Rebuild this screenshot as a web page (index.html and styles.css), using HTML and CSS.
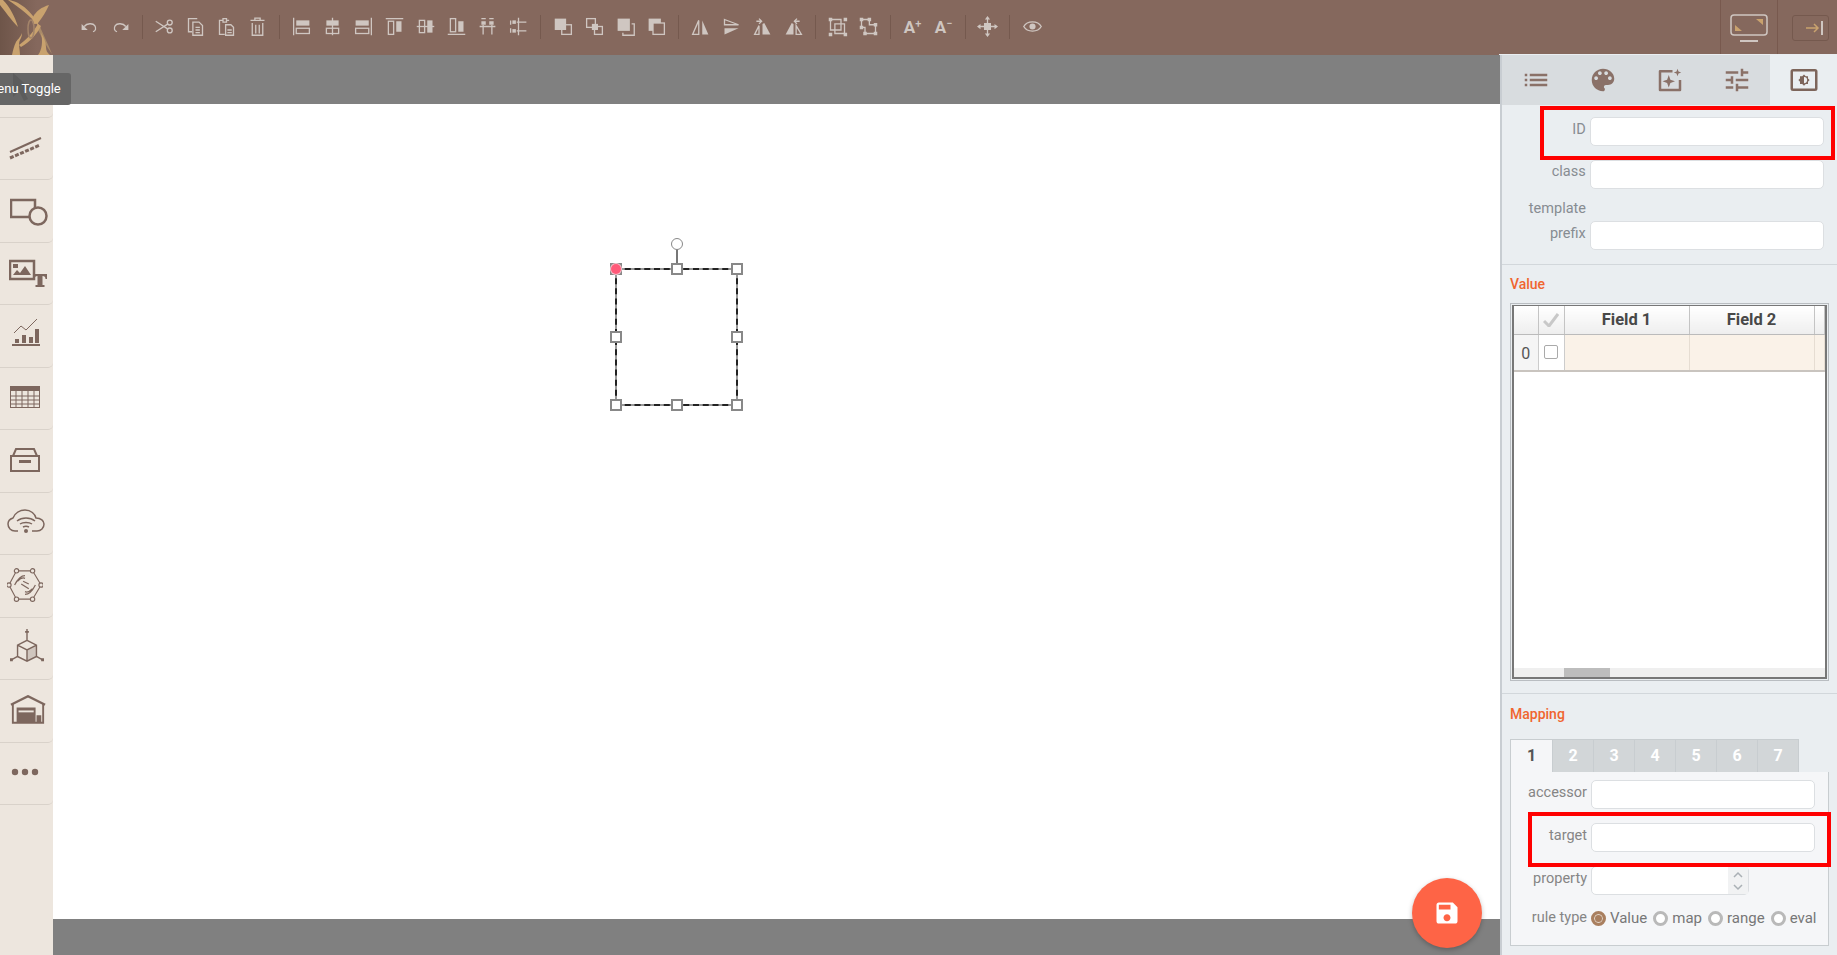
FILE: index.html
```html
<!doctype html>
<html>
<head>
<meta charset="utf-8">
<title>Editor</title>
<link rel="stylesheet" href="styles.css">
</head>

<body>
	<div class="head">
		<div class="logo">
			<svg width="53" height="55" viewBox="0 0 53 55"><g fill="#c9a26e"><path d="M3 0C10 7 15 17 18 27C11 20 5 11 0 5V0Z"/><path d="M8 0C21 1 34 14 41 29C32 17 20 8 8 0Z"/><path d="M40 27C44 36 48 44 52 54C46 46 42 38 38 30Z" fill="#a98a68"/><path d="M49 5C42 7 36 11 33 17C31 22 33 26 38 23C42 18 46 12 49 5Z"/><path d="M38 24C32 34 26 40 19 45L21 47C30 42 37 34 41 26Z"/><path d="M22 33C20 38 17 40 16 42C14 46 13 50 12 55H20C20 49 18 44 20 40C21 38 22 36 22 33Z"/><path d="M41 33C44 38 46 42 46 47C46 50 47 53 50 55H38C42 50 43 41 41 33Z"/></g><ellipse cx="31" cy="29" rx="3" ry="9" fill="none" stroke="#a3846a" stroke-width="1.500"/></svg>
		</div>
		<div class="tools">
			<span class="tool"><svg viewBox="0 0 24 24"><path d="M3 9v7h7z"/><path class="ln" d="M6 12C9 8 16 8 18 11C20 14 19 17 16 18"/></svg></span>
			<span class="tool"><svg viewBox="0 0 24 24"><path d="M21 9v7h-7z"/><path class="ln" d="M18 12C15 8 8 8 6 11C4 14 5 17 8 18"/></svg></span>
			<i class="sep"></i>
			<span class="tool"><svg viewBox="0 0 24 24"><circle class="ln" cx="18" cy="7.500" r="2.800"/><circle class="ln" cx="18" cy="16.500" r="2.800"/><path class="ln" d="M2 6L16 15M2 18L16 9"/></svg></span>
			<span class="tool"><svg viewBox="0 0 24 24"><path class="ln" d="M14 3H4v15h4M9 7h7l4 4v11H9zM12 13h5M12 16h5M12 19h5"/></svg></span>
			<span class="tool"><svg viewBox="0 0 24 24"><path class="ln" d="M8 5H4v16h6M15 5h-3M8 3h4v4H8zM11 10h6l3 3v9h-9zM13 16h5M13 19h5"/></svg></span>
			<span class="tool"><svg viewBox="0 0 24 24"><path class="ln" d="M4 5h16M9 5V2.500h6V5M6 8v14h12V8M10 10v10M14 10v10"/></svg></span>
			<i class="sep"></i>
			<span class="tool"><svg viewBox="0 0 24 24"><path class="ln" d="M3 2v20"/><rect x="6" y="5" width="15" height="6"/><rect class="ln" x="6" y="14" width="15" height="6"/></svg></span>
			<span class="tool"><svg viewBox="0 0 24 24"><path class="ln" d="M12 2v20"/><rect x="5" y="5" width="14" height="6"/><rect class="ln" x="5" y="14" width="14" height="6"/></svg></span>
			<span class="tool"><svg viewBox="0 0 24 24"><path class="ln" d="M21 2v20"/><rect x="3" y="5" width="15" height="6"/><rect class="ln" x="3" y="14" width="15" height="6"/></svg></span>
			<span class="tool"><svg viewBox="0 0 24 24"><path class="ln" d="M2 3h20"/><rect class="ln" x="5" y="6" width="6" height="15"/><rect x="14" y="6" width="6" height="12"/></svg></span>
			<span class="tool"><svg viewBox="0 0 24 24"><path class="ln" d="M2 12h20"/><rect class="ln" x="5" y="5" width="6" height="14"/><rect x="14" y="5" width="6" height="14"/></svg></span>
			<span class="tool"><svg viewBox="0 0 24 24"><path class="ln" d="M2 21h20"/><rect class="ln" x="5" y="3" width="6" height="15"/><rect x="14" y="6" width="6" height="12"/></svg></span>
			<span class="tool"><svg viewBox="0 0 24 24"><path class="ln" d="M7 10v11M17 10v11M3 12h18M5 3h5M14 3h5" /><rect x="5" y="6" width="5" height="4"/><rect x="14" y="6" width="5" height="4"/></svg></span>
			<span class="tool"><svg viewBox="0 0 24 24"><path class="ln" d="M12 2v20M10 7h11M10 17h11M3 5v5M3 14v5"/><rect x="5" y="5" width="4" height="4"/><rect x="5" y="15" width="4" height="4"/></svg></span>
			<i class="sep"></i>
			<span class="tool"><svg viewBox="0 0 24 24"><rect x="2" y="3" width="13" height="13"/><rect class="ln" x="10" y="10" width="11" height="11"/></svg></span>
			<span class="tool"><svg viewBox="0 0 24 24"><rect class="ln" x="3" y="3" width="10" height="10"/><rect x="9" y="9" width="7" height="7"/><rect class="ln" x="12" y="12" width="9" height="9"/></svg></span>
			<span class="tool"><svg viewBox="0 0 24 24"><rect x="3" y="3" width="14" height="14"/><path class="ln" d="M19 9h3v13H9v-3"/></svg></span>
			<span class="tool"><svg viewBox="0 0 24 24"><rect x="3" y="3" width="14" height="14"/><rect class="ln bg" x="8" y="8" width="13" height="13"/></svg></span>
			<i class="sep"></i>
			<span class="tool"><svg viewBox="0 0 24 24"><path class="ln" d="M10 5L3 21h7z"/><path d="M14 5l7 16h-7z"/></svg></span>
			<span class="tool"><svg viewBox="0 0 24 24"><path class="ln" d="M4 4l16 6H4z"/><path d="M4 14h16L4 21z"/></svg></span>
			<span class="tool"><svg viewBox="0 0 24 24"><path class="ln" d="M8 11L3 21h5z"/><path d="M14 8l7 13h-9V9z"/><path class="ln" d="M5 6h6M8 3l3 3-3 3"/></svg></span>
			<span class="tool"><svg viewBox="0 0 24 24"><path d="M10 8L3 21h9V9z"/><path class="ln" d="M15 11l6 10h-6zM19 6h-6M16 3l-3 3 3 3"/></svg></span>
			<i class="sep"></i>
			<span class="tool"><svg viewBox="0 0 24 24"><path class="ln" d="M4 4h12v12H4zM9 9h11v11H9z"/><path d="M2 2h4v4H2zM19 2h4v4h-4zM2 19h4v4H2zM19 19h4v4h-4z"/></svg></span>
			<span class="tool"><svg viewBox="0 0 24 24"><path class="ln" d="M4 4h9v6h7v10H8v-7H4z"/><path d="M2 2h4v4H2zM11 2h4v4h-4zM2 11h4v4H2zM18 8h4v4h-4zM6 18h4v4H6zM18 18h4v4h-4z"/></svg></span>
			<i class="sep"></i>
			<span class="tool txt">A<sup>+</sup></span>
			<span class="tool txt">A<sup>−</sup></span>
			<i class="sep"></i>
			<span class="tool"><svg viewBox="0 0 24 24"><rect x="8" y="8" width="8" height="8"/><path class="ln" d="M12 2v20M2 12h20"/><path d="M12 0l3 4H9zM12 24l3-4H9zM0 12l4-3v6zM24 12l-4-3v6z"/></svg></span>
			<i class="sep"></i>
			<span class="tool"><svg viewBox="0 0 24 24"><path class="ln" d="M2 12C6 5 18 5 22 12C18 19 6 19 2 12Z"/><circle cx="12" cy="12" r="3.500"/></svg></span>
		</div>
		<div class="head-right">
			<div class="hr-cell">
				<svg width="38" height="28" viewBox="0 0 38 28"><rect x="1" y="1" width="36" height="20" rx="3" fill="none" stroke="#cfc6c1" stroke-width="1.500"/><path d="M10 27h18" stroke="#cfc6c1" stroke-width="2"/><path d="M5 17V11l7 6zM33 5v6l-7-6z" fill="#c9a26e"/></svg>
			</div>
			<div class="hr-cell hr-last">
				<span class="collapse"><svg width="20" height="16" viewBox="0 0 20 16"><path d="M1 8h12M9 4l4 4-4 4" fill="none" stroke="#c9a26e" stroke-width="1.500"/><path d="M17 1v14" stroke="#cfc6c1" stroke-width="2"/></svg></span>
			</div>
		</div>
	</div>

	<div class="main">
		<div class="side">
			<div class="side-item">
				<div class="tip">
					<svg class="tip-arrow" width="22" height="28" viewBox="0 0 22 28"><path d="M1 0V24l6-6 5 10 4-2-5-9h9z"/></svg>
					Menu Toggle
				</div>
			</div>
			<div class="side-item"><svg class="ic-line" width="36" height="30" viewBox="0 0 36 30"><path class="s" d="M3 18L34 4" stroke-width="2"/><path class="s" d="M3 24L33 11" stroke-width="3" stroke-dasharray="4 1.500"/></svg></div>
			<div class="side-item"><svg class="ic-shape" width="38" height="30" viewBox="0 0 38 30"><path class="s" d="M20 20H1V3h24v8" stroke-width="2.500"/><circle class="s" cx="28" cy="19" r="8.500" stroke-width="2.500"/></svg></div>
			<div class="side-item"><svg class="ic-media" width="38" height="30" viewBox="0 0 38 30"><path class="s" d="M1 3h24v18H1z" stroke-width="2.500"/><path class="f" d="M4 17l4-5 3 3 5-7 6 9zM4 6h5v4H4z"/><path class="f" d="M24 16h14v5h-1.500c0-2-1-3-3-3v9h2v2h-9v-2h2v-9c-2 0-3 1-3 3H24z"/></svg></div>
			<div class="side-item"><svg class="ic-chart" width="30" height="28" viewBox="0 0 30 28"><path class="s" d="M1 27h28" stroke-width="2"/><path class="s" d="M3 15l7-7 5 4 11-11" stroke-width="1"/><path class="f" d="M4 21h4v4H4zM11 17h4v8h-4zM18 19h4v6h-4zM24 11h4v14h-4z"/></svg></div>
			<div class="side-item"><svg width="30" height="22" viewBox="0 0 30 22"><rect class="s" x=".5" y=".5" width="29" height="21" stroke-width="1"/><path class="f" d="M0 0h30v5H0z"/><path class="s" d="M0 10h30M0 14h30M0 18h30M6 5v17M12 5v17M18 5v17M24 5v17" stroke-width="1"/></svg></div>
			<div class="side-item"><svg width="30" height="26" viewBox="0 0 30 26"><path class="s" d="M3 9l3-7h18l3 7M1 9h28v15H1z" stroke-width="2"/><path class="f" d="M9 13h12v3H9z"/></svg></div>
			<div class="side-item"><svg class="ic-cloud" width="38" height="26" viewBox="0 0 38 26"><path class="s" d="M11 22H8C4 22 1 19 1 15C1 12 3 10 6 9C8 4 13 1 18 1C24 1 28 5 29 9C34 9 37 12 37 15C37 19 34 22 30 22H25" stroke-width="1.500"/><path class="s" d="M10 12C15 8 23 8 28 12M13 15C16 13 22 13 25 15M16 18C18 17 20 17 22 18" stroke-width="1.500"/><circle class="f" cx="19" cy="22" r="2"/></svg></div>
			<div class="side-item"><svg width="36" height="34" viewBox="0 0 38 36"><path class="s" d="M10 3h17l9 15-9 15H10L2 18z" stroke-width="1.200"/><circle class="w" cx="10" cy="3" r="2.300"/><circle class="w" cx="27" cy="3" r="2.300"/><circle class="w" cx="36" cy="18" r="2.300"/><circle class="w" cx="27" cy="33" r="2.300"/><circle class="w" cx="10" cy="33" r="2.300"/><circle class="w" cx="2" cy="18" r="2.300"/><path class="s" d="M11 14C14 11 17 10 19 11M8 18C11 12 15 8 19 8M27 22C24 25 21 26 19 25M30 18C27 24 23 28 19 28M15 17l8 5M17 14l6 3" stroke-width="1.300"/></svg></div>
			<div class="side-item"><svg class="ic-cube" width="34" height="36" viewBox="0 0 36 38"><path class="s" d="M18 0v12M8 17l10-5 10 5v12l-10 5-10-5zM8 17l10 5 10-5M18 22v12M8 29l-7 4M28 29l7 4" stroke-width="1.500"/><path class="f" d="M18 22l10-5v12l-10 5z" opacity=".25"/><path class="f" d="M16 2h4v2h-4zM0 31h3v3H0zM33 31h3v3h-3z"/></svg></div>
			<div class="side-item"><svg class="ic-house" width="36" height="29" viewBox="0 0 38 30"><path class="s" d="M1 10L19 1l18 9" stroke-width="2.500"/><path class="s" d="M3 9v20h32V9" stroke-width="2"/><path class="f" d="M7 13h20v16H7zM28 21h5v8h-5z"/><path d="M9 16h16v2H9z" fill="#ede6de"/></svg></div>
			<div class="side-item"><svg width="28" height="8" viewBox="0 0 28 8"><circle class="f" cx="4" cy="4" r="3.200"/><circle class="f" cx="14" cy="4" r="3.200"/><circle class="f" cx="24" cy="4" r="3.200"/></svg></div>
		</div>

		<div class="stage">
			<div class="band"></div>
			<div class="canvas">
				<div class="sel">
					<i class="rot-line"></i>
					<i class="rot"></i>
					<i class="hd tl"></i><i class="hd tc"></i><i class="hd tr"></i>
					<i class="hd ml"></i><i class="hd mr"></i>
					<i class="hd bl"></i><i class="hd bc"></i><i class="hd br"></i>
					<i class="dot"></i>
				</div>
			</div>
			<div class="band-b"></div>
			<div class="fab"><svg width="28" height="28" viewBox="0 0 24 24"><path fill="#fff" d="M17 3H5c-1.110 0-2 .9-2 2v14c0 1.100.89 2 2 2h14c1.100 0 2-.9 2-2V7l-4-4zm-5 16c-1.660 0-3-1.340-3-3s1.340-3 3-3 3 1.340 3 3-1.340 3-3 3zm3-10H5V5h10v4z"/></svg></div>
		</div>

		<div class="panel">
			<div class="tabs">
				<div class="tab"><svg viewBox="0 0 24 24"><path d="M3 13h2v-2H3v2zm0 4h2v-2H3v2zm0-8h2V7H3v2zm4 4h14v-2H7v2zm0 4h14v-2H7v2zM7 7v2h14V7H7z"/></svg></div>
				<div class="tab"><svg viewBox="0 0 24 24"><path d="M12 3c-4.970 0-9 4.030-9 9s4.030 9 9 9c.83 0 1.500-.67 1.500-1.500 0-.39-.15-.74-.39-1.010-.23-.26-.38-.61-.38-.99 0-.83.67-1.500 1.500-1.500H16c2.760 0 5-2.240 5-5 0-4.420-4.030-8-9-8zm-5.500 9c-.83 0-1.500-.67-1.500-1.500S5.670 9 6.500 9 8 9.670 8 10.500 7.330 12 6.500 12zm3-4C8.670 8 8 7.330 8 6.500S8.670 5 9.500 5s1.500.67 1.500 1.500S10.330 8 9.500 8zm5 0c-.83 0-1.500-.67-1.500-1.500S13.670 5 14.500 5s1.500.67 1.500 1.500S15.330 8 14.500 8zm3 4c-.83 0-1.500-.67-1.500-1.500S16.670 9 17.500 9s1.500.67 1.500 1.500-.67 1.500-1.500 1.500z"/></svg></div>
				<div class="tab"><svg viewBox="0 0 24 24"><path d="M14 4H4a1 1 0 0 0-1 1v15a1 1 0 0 0 1 1h16a1 1 0 0 0 1-1V12h-2v7H5V6h9z"/><path d="M11 8l1.300 3.700L16 13l-3.700 1.300L11 18l-1.300-3.700L6 13l3.700-1.300zM18 3l.8 2.200L21 6l-2.200.8L18 9l-.8-2.200L15 6l2.200-.8z"/></svg></div>
				<div class="tab"><svg viewBox="0 0 24 24"><path d="M3 17v2h6v-2H3zM3 5v2h10V5H3zm10 16v-2h8v-2h-8v-2h-2v6h2zM7 9v2H3v2h4v2h2V9H7zm14 4v-2H11v2h10zm-6-4h2V7h4V5h-4V3h-2v6z"/></svg></div>
				<div class="tab tab-on"><svg viewBox="0 0 24 24"><rect x="2.200" y="4.200" width="19.600" height="15.600" rx="1" fill="none" stroke="#7d655b" stroke-width="2"/><path d="M12 7.500l1.400 1.400h1.800v1.800l1.300 1.300-1.300 1.300v1.800h-1.800L12 16.500l-1.400-1.400H8.800v-1.800L7.500 12l1.300-1.300V8.900h1.800z"/><path d="M12 9.500a2.500 2.500 0 0 1 0 5z" fill="#eaeef1"/></svg></div>
			</div>

			<div class="sec sec-top">
				<div class="row mark mark-id"><label>ID</label><input class="ipt" type="text"></div>
				<div class="row"><label>class</label><input class="ipt" type="text"></div>
				<div class="tpl">template</div>
				<div class="row"><label class="lb-prefix">prefix</label><input class="ipt" type="text"></div>
			</div>

			<div class="sec sec-val">
				<h4>Value</h4>
				<div class="grid">
					<div class="grid-in">
						<table>
							<tr class="gh">
								<th class="c0"></th>
								<th class="c1"><svg width="16" height="14" viewBox="0 0 16 14"><path d="M1 8l5 5 9-12" fill="none" stroke="#c8c8c8" stroke-width="3"/></svg></th>
								<th class="c2">Field 1</th>
								<th class="c2">Field 2</th>
								<th></th>
							</tr>
							<tr class="gr">
								<td class="c0 num">0</td>
								<td class="c1 chk"><i class="box"></i></td>
								<td class="cell"></td>
								<td class="cell"></td>
								<td class="cell"></td>
							</tr>
						</table>
						<div class="hbar"><i class="thumb"></i></div>
					</div>
				</div>
			</div>

			<div class="sec sec-map">
				<h4>Mapping</h4>
				<div class="mtabs">
					<span class="mt mt-on">1</span><span class="mt">2</span><span class="mt">3</span><span class="mt">4</span><span class="mt">5</span><span class="mt">6</span><span class="mt">7</span>
				</div>
				<div class="mbox">
					<div class="row"><label>accessor</label><input class="ipt" type="text"></div>
					<div class="row mark mark-tg"><label>target</label><input class="ipt" type="text"></div>
					<div class="row">
						<label>property</label>
						<div class="num-ipt"><span class="spin"><svg width="12" height="22" viewBox="0 0 12 22"><path d="M2 7l4-4 4 4M2 15l4 4 4-4" fill="none" stroke="#aab0b5" stroke-width="1.500"/></svg></span></div>
					</div>
					<div class="row rule">
						<label>rule type</label>
						<span class="rad rad-on"></span><span class="rt">Value</span>
						<span class="rad"></span><span class="rt">map</span>
						<span class="rad"></span><span class="rt">range</span>
						<span class="rad"></span><span class="rt">eval</span>
					</div>
				</div>
			</div>
		</div>
	</div>
</body>
</html>
```

FILE: styles.css
```css
*{
	margin: 0;
	padding: 0;
	box-sizing: border-box;
}
body{
	height: 955px;
	overflow: hidden;
	font-family: Roboto, sans-serif;
	background: #fff;
}

/* top bar */
.head{
	display: flex;
	height: 55px;
	background: #85685d;
}
.logo{
	width: 53px;
	height: 55px;
	overflow: hidden;
	background: linear-gradient(90deg, #6e5549, #85685d 70%);
}
.logo svg{
	display: block;
}
.tools{
	display: flex;
	align-items: center;
	flex: 1;
	padding: 0 0 2px 21px;
}
.tool{
	display: flex;
	align-items: center;
	justify-content: center;
	width: 31px;
	height: 24px;
	color: #cfc6c1;
}
.tool svg{
	width: 21px;
	height: 21px;
	fill: #cfc6c1;
}
.tool .ln{
	fill: none;
	stroke: #cfc6c1;
	stroke-width: 1.5;
}
.tool .bg{
	fill: #85685d;
}
.txt{
	font-size: 17px;
	font-weight: 700;
}
.txt sup{
	font-size: 11px;
	font-weight: 500;
	margin-top: -6px;
	vertical-align: baseline;
}
.sep{
	width: 1px;
	height: 24px;
	margin: 0 6.100px;
	background: #75594e;
}
.head-right{
	display: flex;
	height: 55px;
}
.hr-cell{
	display: flex;
	align-items: center;
	justify-content: center;
	width: 57px;
	border-left: 1px solid #78594e;
}
.hr-last{
	width: 60px;
	padding-right: 8px;
	justify-content: flex-end;
}
.collapse{
	display: flex;
	align-items: center;
	justify-content: flex-end;
	width: 37px;
	height: 26px;
	padding-right: 3px;
	border: 1px solid #75594e;
	border-radius: 3px;
}

.main{
	display: flex;
	height: 900px;
}

/* left menu */
.side{
	width: 53px;
	background: #ede6de;
}
.side-item{
	position: relative;
	display: flex;
	align-items: center;
	justify-content: center;
	height: 62.500px;
	padding: 0 3px 2px 0;
	border-bottom: 1px solid #d9d2ca;
	border-bottom-right-radius: 5px;
}
.side-item .s{
	fill: none;
	stroke: #7d675e;
}
.side-item .f{
	fill: #7d675e;
}
.side-item .w{
	fill: #ede6de;
	stroke: #7d675e;
	stroke-width: 1.2;
}
.ic-line{
	margin-top: 3px;
}
.ic-shape{
	margin: 4px 0 0 7px;
}
.ic-media{
	margin: 2px 0 0 5px;
}
.ic-chart{
	margin: 0 0 6px 2px;
}
.ic-cloud{
	margin-left: 2px;
}
.ic-cube{
	margin-left: 3px;
}
.ic-house{
	margin-left: 5px;
}
.tip{
	position: absolute;
	left: -24px;
	top: 18px;
	height: 32px;
	padding: 0 10px;
	line-height: 32px;
	font-size: 13px;
	color: #fff;
	white-space: nowrap;
	background: #666;
	border-radius: 3px;
	z-index: 5;
}
.tip-arrow{
	position: absolute;
	left: 36px;
	top: 0;
	fill: #5c5c5c;
	z-index: -1;
}

/* canvas */
.stage{
	position: relative;
	display: flex;
	flex-direction: column;
	flex: 1;
	background: #808080;
}
.band{
	height: 49px;
}
.canvas{
	position: relative;
	height: 815px;
	background: #fff;
}
.band-b{
	flex: 1;
}
.sel{
	position: absolute;
	left: 562px;
	top: 164px;
	width: 123px;
	height: 138px;
	border: 2px dashed #222;
	background: linear-gradient(#fff, #fff) padding-box, #999 border-box;
}
.hd{
	position: absolute;
	width: 12px;
	height: 12px;
	background: #fff;
	border: 2px solid #888;
}
.tl{ left: -7px; top: -7px; background: #999; }
.tc{ left: 53.500px; top: -7px; }
.tr{ right: -7px; top: -7px; }
.ml{ left: -7px; top: 61px; }
.mr{ right: -7px; top: 61px; }
.bl{ left: -7px; bottom: -7px; }
.bc{ left: 53.500px; bottom: -7px; }
.br{ right: -7px; bottom: -7px; }
.dot{
	position: absolute;
	left: -6px;
	top: -6px;
	width: 10px;
	height: 10px;
	border-radius: 50%;
	background: #ff5a79;
	box-shadow: 0 0 0 1px #f5c4cd;
}
.rot{
	position: absolute;
	left: 53.500px;
	top: -32px;
	width: 12px;
	height: 12px;
	background: #fff;
	border: 1px solid #888;
	border-radius: 50%;
}
.rot-line{
	position: absolute;
	left: 58.500px;
	top: -21px;
	width: 2px;
	height: 16px;
	background: #777;
}
.fab{
	position: absolute;
	left: 1359px;
	top: 823px;
	display: flex;
	align-items: center;
	justify-content: center;
	width: 70px;
	height: 70px;
	border-radius: 50%;
	background: #fe6446;
	box-shadow: 0 2px 5px rgba(0, 0, 0, .25);
}

/* right panel */
.panel{
	width: 337px;
	height: 900px;
	background: #eaeef1;
	border-left: 2px solid #c8cdd2;
	outline: 1px solid #eaeef1;
}
.tabs{
	display: flex;
	height: 50px;
	background: #d8dcdf;
}
.tab{
	display: flex;
	align-items: center;
	justify-content: center;
	flex: 1;
}
.tab svg{
	width: 30px;
	height: 30px;
	fill: #8a7168;
}
.tab-on{
	background: #eaeef1;
}
.tab-on svg{
	fill: #7d655b;
}
.sec{
	border-bottom: 1px solid #d2d7db;
}
.sec-top{
	height: 160px;
	padding: 12px 13px 0 0;
}
.row{
	display: flex;
	align-items: flex-start;
	height: 29px;
	margin-bottom: 14px;
}
.row label{
	width: 84px;
	font-size: 14.500px;
	line-height: 23px;
	color: #878c92;
	text-align: right;
}
.row .lb-prefix{
	line-height: 26px;
}
.mark-id label{
	line-height: 25px;
}
.ipt{
	width: 235px;
	height: 29px;
	margin-left: 4px;
	background: #fff;
	border: 1px solid #dcdfe2;
	border-radius: 5px;
	outline: none;
}
.tpl{
	width: 84px;
	height: 22px;
	margin-top: -5px;
	margin-bottom: 1px;
	font-size: 14.500px;
	line-height: 22px;
	color: #878c92;
	text-align: right;
}
.mark{
	position: relative;
}
.mark:after{
	content: "";
	position: absolute;
	border: 4px solid #f00;
	pointer-events: none;
}
.mark-id:after{
	left: 38px;
	right: -11px;
	top: -11px;
	bottom: -14px;
}
h4{
	font-size: 14px;
	font-weight: 500;
	color: #f0652f;
}
.sec-val{
	height: 429px;
	padding: 11px 7px 0 8px;
}
.grid{
	width: 319px;
	height: 378px;
	margin-top: 11px;
	padding: 1px;
	border: 1px solid #b9bdc1;
}
.grid-in{
	display: flex;
	flex-direction: column;
	justify-content: space-between;
	height: 100%;
	background: #fff;
	border: 2px solid #777;
	border-top-width: 1px;
}
table{
	width: 100%;
	table-layout: fixed;
	border-collapse: collapse;
}
.gh th{
	height: 28px;
	font-size: 16.500px;
	font-weight: 700;
	color: #484848;
	background: linear-gradient(#fff, #eee);
	border-right: 1px solid #c4c4c4;
	border-bottom: 1px solid #bbb;
}
.gh svg{
	display: block;
	margin: 0 auto;
}
.gr td{
	height: 37px;
	border-right: 1px solid #e6ddd2;
	border-bottom: 2px solid #c9c4bf;
}
.c0{
	width: 24px;
}
.c1{
	width: 26px;
}
.c2{
	width: 125px;
}
.gr .num{
	padding-top: 2px;
	font-size: 16px;
	color: #555;
	text-align: center;
	background: #f5f5f5;
	border-right: 1px solid #ccc;
}
.gr .chk{
	border-right: 1px solid #ccc;
}
.box{
	display: block;
	width: 14px;
	height: 14px;
	margin: 0 auto;
	background: #fff;
	border: 1px solid #aaa;
	border-radius: 2px;
}
.cell{
	background: #faf2e8;
}
.hbar{
	height: 9px;
	background: #efefef;
}
.thumb{
	display: block;
	width: 46px;
	height: 9px;
	margin-left: 50px;
	background: #bdbdbd;
}
.sec-map{
	border-bottom: 0;
	padding: 12px 7px 0 8px;
}
.mtabs{
	display: flex;
	margin-top: 17px;
	height: 33px;
}
.mt{
	width: 41px;
	line-height: 31px;
	font-size: 16px;
	font-weight: 700;
	color: #fff;
	text-align: center;
	background: #d2d6d8;
	border: 1px solid #c8cdd0;
	border-bottom: 0;
	border-left: 0;
}
.mt-on{
	width: 43px;
	color: #555;
	background: #f5f6f8;
	border-left: 1px solid #c8cdd0;
	border-top: 1px solid #c8cdd0;
	border-right: 1px solid #c8cdd0;
}
.mbox{
	width: 319px;
	height: 174px;
	padding-top: 8px;
	background: #f5f6f8;
	border: 1px solid #c8cdd0;
	border-top: 0;
}
.mbox .row{
	margin-bottom: 0;
	height: 43px;
}
.mbox .row label{
	width: 76px;
	line-height: 25px;
	color: #858585;
}
.mbox .ipt{
	width: 224px;
	margin-left: 4px;
}
.mbox .mark-tg:after{
	left: 17px;
	right: -3px;
	top: -11px;
	bottom: -1px;
}
.num-ipt{
	display: flex;
	justify-content: flex-end;
	width: 158px;
	height: 29px;
	margin-left: 4px;
	background: #fff;
	border: 1px solid #dcdfe2;
	border-radius: 5px;
}
.spin{
	display: flex;
	align-items: center;
	justify-content: center;
	width: 20px;
	background: #f1f2f3;
}
.mbox .rule{
	align-items: center;
	height: 18px;
	font-size: 15px;
	color: #777;
}
.mbox .rule label{
	line-height: 18px;
}
.rad{
	flex: none;
	width: 15px;
	height: 15px;
	margin-left: 6px;
	border: 3px solid #b9b9b9;
	border-radius: 50%;
	background: #fff;
}
.rad-on{
	margin-left: 4px;
	background: #a97f5f;
	border-color: #a97f5f;
	box-shadow: inset 0 0 0 1px #e4d8cc;
}
.rt{
	margin-left: 4px;
}
```
